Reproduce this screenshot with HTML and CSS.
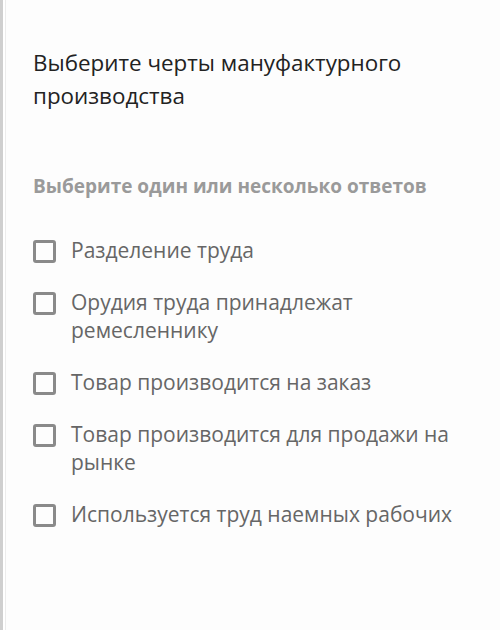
FILE: index.html
```html
<!DOCTYPE html>
<html lang="ru">
<head>
<meta charset="UTF-8">
<title>Вопрос</title>
<link rel="stylesheet" href="styles.css">
</head>
<body>

<div class="question">
	<div class="question-title">Выберите черты мануфактурного производства</div>
	<div class="question-hint">Выберите один или несколько ответов</div>

	<div class="answers">
		<label class="answer">
			<span class="answer-box"></span>
			<span class="answer-text">Разделение труда</span>
		</label>
		<label class="answer">
			<span class="answer-box"></span>
			<span class="answer-text">Орудия труда принадлежат ремесленнику</span>
		</label>
		<label class="answer">
			<span class="answer-box"></span>
			<span class="answer-text">Товар производится на заказ</span>
		</label>
		<label class="answer">
			<span class="answer-box"></span>
			<span class="answer-text">Товар производится для продажи на рынке</span>
		</label>
		<label class="answer">
			<span class="answer-box"></span>
			<span class="answer-text">Используется труд наемных рабочих</span>
		</label>
	</div>
</div>

</body>
</html>
```

FILE: styles.css
```css
html, body {
	margin: 0;
	padding: 0;
	background: #fdfdfd;
}
body {
	font-family: "Open Sans", "Noto Sans", sans-serif;
	width: 500px;
	height: 630px;
	overflow: hidden;
}

.question {
	height: 630px;
	box-sizing: border-box;
	border-left: 3px solid #cfcfcf;
	box-shadow: inset 2px 0 0 #fff, inset 3px 0 0 #ececec;
	padding: 46px 20px 0 30px;
}
.question-title {
	font-size: 22.4px;
	line-height: 33px;
	color: #222;
	width: 420px;
}
.question-hint {
	margin-top: 61px;
	font-size: 19px;
	line-height: 26px;
	font-weight: bold;
	color: #9a9a9a;
}

.answers {
	margin-top: 37px;
	display: flex;
	flex-direction: column;
	gap: 24px;
}
.answer {
	display: flex;
	align-items: flex-start;
	gap: 15px;
	cursor: pointer;
}
.answer-box {
	flex: none;
	width: 17px;
	height: 17px;
	margin-top: 4px;
	border: 3px solid #8a8a8a;
	border-radius: 3px;
}
.answer-text {
	width: 400px;
	font-size: 21px;
	line-height: 28px;
	color: #666;
}
```
